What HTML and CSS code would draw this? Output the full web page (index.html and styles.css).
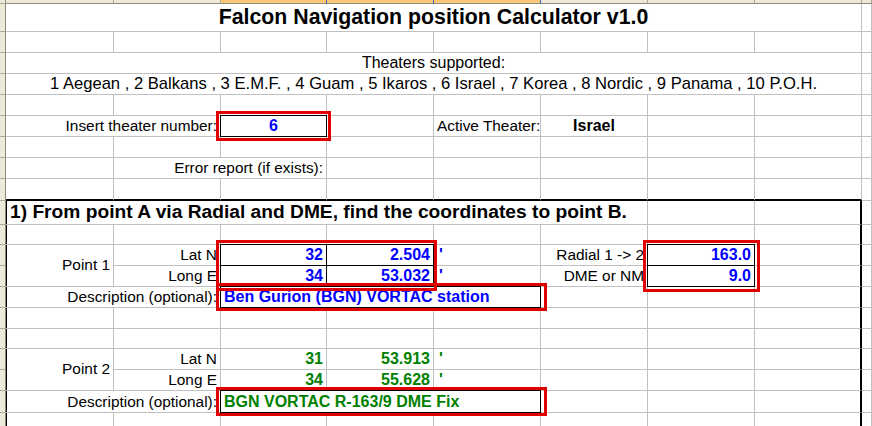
FILE: index.html
```html
<!DOCTYPE html>
<html lang="en">

<head>
  <meta charset="UTF-8">
  <title>Falcon Navigation position Calculator v1.0</title>
  <link rel="stylesheet" href="styles.css">
</head>

<body>
  <div class="sheet-wrap">
    <table class="sheet">
      <colgroup>
        <col class="c-rh"><col class="c-a"><col class="c-b"><col class="c-c"><col class="c-d"><col class="c-e"><col class="c-f"><col class="c-g"><col class="c-h"><col>
      </colgroup>

      <!-- column headers (only the lower edge is visible) -->
      <tr class="r-head">
        <td class="rh"></td><td class="ch"></td><td class="ch"></td><td class="ch sel"></td><td class="ch sel"></td><td class="ch sel"></td><td class="ch"></td><td class="ch"></td><td class="ch"></td><td class="ch"></td>
      </tr>

      <tr class="r-title">
        <td class="rh"></td><td colspan="8" class="c title">Falcon Navigation position Calculator v1.0</td><td></td>
      </tr>
      <tr><td class="rh"></td><td></td><td></td><td></td><td></td><td></td><td></td><td></td><td></td><td></td></tr>
      <tr>
        <td class="rh"></td><td colspan="8" class="c big">Theaters supported:</td><td></td>
      </tr>
      <tr>
        <td class="rh"></td><td colspan="8" class="c list">1 Aegean , 2 Balkans , 3 E.M.F. , 4 Guam , 5 Ikaros , 6 Israel , 7 Korea , 8 Nordic , 9 Panama , 10 P.O.H.</td><td></td>
      </tr>
      <tr><td class="rh"></td><td></td><td></td><td></td><td></td><td></td><td></td><td></td><td></td><td></td></tr>
      <tr>
        <td class="rh"></td>
        <td colspan="2" class="r">Insert theater number:</td>
        <td class="inp blue c mark">6</td>
        <td></td>
        <td class="r">Active Theater:</td>
        <td class="c val">Israel</td>
        <td></td><td></td><td></td>
      </tr>
      <tr><td class="rh"></td><td></td><td></td><td></td><td></td><td></td><td></td><td></td><td></td><td></td></tr>
      <tr>
        <td class="rh"></td><td></td>
        <td colspan="2" class="r">Error report (if exists):</td>
        <td></td><td></td><td></td><td></td><td></td><td></td>
      </tr>
      <tr class="r-22">
        <td class="rh"></td><td class="top"></td><td class="top"></td><td class="top"></td><td class="top"></td><td class="top"></td><td class="top"></td><td class="top"></td><td class="top"></td><td></td>
      </tr>

      <!-- section 1 -->
      <tr class="r-head2">
        <td class="rh"></td>
        <td colspan="6" class="l heading">1) From point A via Radial and DME, find the coordinates to point B.</td>
        <td></td><td class="rt"></td><td></td>
      </tr>
      <tr class="r-20"><td class="rh"></td><td class="l"></td><td></td><td></td><td></td><td></td><td></td><td></td><td class="rt"></td><td></td></tr>
      <tr>
        <td class="rh"></td>
        <td rowspan="2" class="l r mid">Point 1</td>
        <td class="r">Lat N</td>
        <td class="inp blue r mark mark-ll">32</td>
        <td class="inp blue r">2.504</td>
        <td class="val tick blue">'</td>
        <td class="r">Radial 1 -&gt; 2</td>
        <td class="inp blue r mark mark-rd">163.0</td>
        <td class="rt"></td><td></td>
      </tr>
      <tr>
        <td class="rh"></td>
        <td class="r">Long E</td>
        <td class="inp blue r">34</td>
        <td class="inp blue r">53.032</td>
        <td class="val tick blue">'</td>
        <td class="r">DME or NM</td>
        <td class="inp blue r">9.0</td>
        <td class="rt"></td><td></td>
      </tr>
      <tr>
        <td class="rh"></td>
        <td colspan="2" class="l r">Description (optional):</td>
        <td colspan="3" class="inp blue mark mark-ds">Ben Gurion (BGN) VORTAC station</td>
        <td></td><td></td><td class="rt"></td><td></td>
      </tr>
      <tr><td class="rh"></td><td class="l"></td><td></td><td></td><td></td><td></td><td></td><td></td><td class="rt"></td><td></td></tr>
      <tr class="r-20"><td class="rh"></td><td class="l"></td><td></td><td></td><td></td><td></td><td></td><td></td><td class="rt"></td><td></td></tr>
      <tr>
        <td class="rh"></td>
        <td rowspan="2" class="l r mid">Point 2</td>
        <td class="r">Lat N</td>
        <td class="val green r">31</td>
        <td class="val green r">53.913</td>
        <td class="val tick green">'</td>
        <td></td><td></td><td class="rt"></td><td></td>
      </tr>
      <tr>
        <td class="rh"></td>
        <td class="r">Long E</td>
        <td class="val green r">34</td>
        <td class="val green r">55.628</td>
        <td class="val tick green">'</td>
        <td></td><td></td><td class="rt"></td><td></td>
      </tr>
      <tr class="r-22">
        <td class="rh"></td>
        <td colspan="2" class="l r">Description (optional):</td>
        <td colspan="3" class="inp green mark mark-ds">BGN VORTAC R-163/9 DME Fix</td>
        <td></td><td></td><td class="rt"></td><td></td>
      </tr>
      <tr><td class="rh"></td><td class="l"></td><td></td><td></td><td></td><td></td><td></td><td></td><td class="rt"></td><td></td></tr>
    </table>
  </div>
</body>

</html>
```

FILE: styles.css
```css
html,
body {
  margin: 0;
  padding: 0;
  background-color: #fff;
  font-family: "Liberation Sans", Arial, sans-serif;
  color: #000;
}

.sheet-wrap {
  width: 872px;
  height: 426px;
  overflow: hidden;
}

.sheet {
  table-layout: fixed;
  width: 872px;
  border-collapse: separate;
  border-spacing: 0;
}

.c-rh { width: 6px; }
.c-a { width: 108px; }
.c-b { width: 107px; }
.c-c { width: 106px; }
.c-d,
.c-e,
.c-f,
.c-g,
.c-h { width: 107px; }

.sheet tr { height: 21px; }
.sheet tr.r-head { height: 4px; }
.sheet tr.r-title { height: 28px; }
.sheet tr.r-20 { height: 20px; }
.sheet tr.r-22 { height: 22px; }
.sheet tr.r-head2 { height: 24px; }

.sheet td {
  border-right: 1px solid #c0c0c0;
  border-bottom: 1px solid #c0c0c0;
  padding: 0 3px 1px;
  font-size: 15.4px;
  line-height: 1.15;
  white-space: nowrap;
  vertical-align: bottom;
}

/* row / column headers of the spreadsheet */
.sheet td.rh {
  padding: 0;
  background-color: #ece9d8;
  border-right: 1px solid #8c8a78;
  border-bottom: 1px solid #aca899;
}

.sheet td.ch {
  padding: 0;
  background-color: #ece9d8;
  border-right: 1px solid #aca899;
  border-bottom: 1px solid #8c8a78;
}

.sheet td.ch.sel {
  background-color: #fbc87a;
  border-right-color: #3c64c0;
}

.c { text-align: center; }
.r { text-align: right; }
.mid { vertical-align: middle !important; }

.title {
  font-size: 21.3px !important;
  font-weight: bold;
  padding-bottom: 2px !important;
}

.big { font-size: 16px !important; }
.list { font-size: 16.6px !important; }

.heading {
  font-size: 19.2px !important;
  font-weight: bold;
  padding-left: 4px !important;
}

.val {
  font-size: 16px !important;
  font-weight: bold;
}

.sheet td.tick { padding-left: 5px; }

.blue { color: #0000ff; }
.green { color: #008000; }

/* input cells with thin black frame */
.sheet td.inp {
  font-size: 16px;
  font-weight: bold;
  border-right-color: #000;
  border-bottom-color: #000;
  box-shadow: -1px 0 0 #000, 0 -1px 0 #000, -1px -1px 0 #000;
}

/* thick frame of section 1 */
.sheet td.top { border-bottom: 2px solid #000; }
.sheet td.rt { border-right: 2px solid #000; }
.sheet td.l { box-shadow: inset 1px 0 0 #000; }

/* red annotation boxes */
.mark { position: relative; }

.mark::after {
  content: "";
  position: absolute;
  top: -5px;
  left: -5px;
  right: -5px;
  bottom: -5px;
  border: 3px solid #e10000;
  z-index: 2;
  pointer-events: none;
}

.mark-ll::after {
  right: -111px;
  bottom: -26px;
}

.mark-rd::after {
  right: -6px;
  bottom: -27px;
}

.mark-ds::after {
  top: -4px;
  bottom: -4px;
  right: -7px;
}
```
